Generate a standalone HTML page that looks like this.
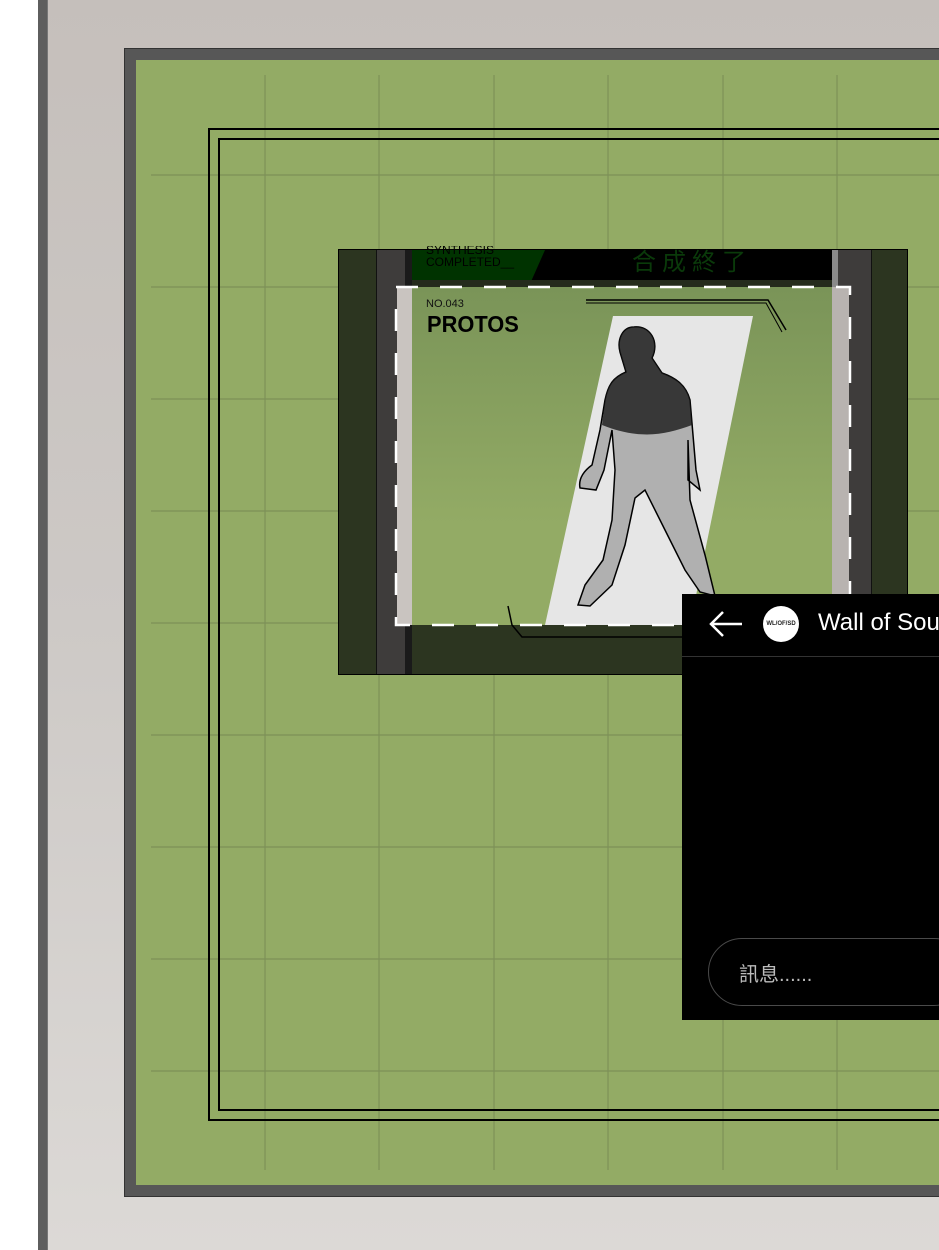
<!DOCTYPE html>
<html><head><meta charset="utf-8"><style>
*{margin:0;padding:0;box-sizing:border-box}
body{width:939px;height:1250px;overflow:hidden;position:relative;background:#fff;font-family:"Liberation Sans","Noto Sans CJK TC",sans-serif}
.a{position:absolute}
</style></head><body>
<div class="a" style="left:38px;top:0;width:10px;height:1250px;background:#5e5e5e;border-right:1px solid #777"></div>
<div class="a" style="left:48px;top:0;width:891px;height:1250px;background:linear-gradient(#c5bfbb,#cdc9c6 50%,#dcd9d6)"></div>
<div class="a" style="left:124px;top:48px;width:830px;height:1149px;background:#575757;border:1px solid #333"></div>
<div class="a" style="left:136px;top:60px;width:820px;height:1125px;background:#93ab65"></div>
<svg class="a" style="left:0;top:0" width="939" height="1250">
<g stroke="#7d9158" stroke-width="1.2">
<line x1="265" y1="75" x2="265" y2="1170"/><line x1="379" y1="75" x2="379" y2="1170"/><line x1="494" y1="75" x2="494" y2="1170"/><line x1="608" y1="75" x2="608" y2="1170"/><line x1="723" y1="75" x2="723" y2="1170"/><line x1="837" y1="75" x2="837" y2="1170"/>
<line x1="151" y1="175" x2="939" y2="175"/><line x1="151" y1="287" x2="939" y2="287"/><line x1="151" y1="399" x2="939" y2="399"/><line x1="151" y1="511" x2="939" y2="511"/><line x1="151" y1="623" x2="939" y2="623"/><line x1="151" y1="735" x2="939" y2="735"/><line x1="151" y1="847" x2="939" y2="847"/><line x1="151" y1="959" x2="939" y2="959"/><line x1="151" y1="1071" x2="939" y2="1071"/>
</g>
<g fill="none" stroke="#000" stroke-width="2">
<rect x="209" y="129" width="760" height="991"/><rect x="219" y="139" width="740" height="971"/>
</g>
</svg>
<!-- card -->
<div class="a" style="left:338px;top:249px;width:570px;height:426px;background:#2c3520;border:1px solid #000"></div>
<div class="a" style="left:376px;top:250px;width:29px;height:424px;background:#3e3c3b;border-left:1px solid #111"></div>
<div class="a" style="left:405px;top:250px;width:7px;height:424px;background:#1a1a1a"></div>
<div class="a" style="left:832px;top:250px;width:6px;height:424px;background:#8a8a8a"></div>
<div class="a" style="left:838px;top:250px;width:34px;height:424px;background:#3e3c3b;border-right:1px solid #111"></div>
<div class="a" style="left:412px;top:250px;width:420px;height:30px;background:#000"></div>
<div class="a" style="left:412px;top:250px;width:133px;height:30px;background:#003300;clip-path:polygon(0 0,100% 0,90% 100%,0 100%)"></div>
<div class="a" style="left:426px;top:246px;font-size:12px;line-height:12px;color:#000;letter-spacing:0;overflow:hidden;height:26px;width:120px"><div style="margin-top:-2px">SYNTHESIS<br>COMPLETED__</div></div>
<div class="a" style="left:632px;top:247px;font-size:24px;line-height:26px;color:#0a3a0a;letter-spacing:6px;font-family:'Noto Sans CJK TC',sans-serif">合成終了</div>
<div class="a" style="left:412px;top:280px;width:420px;height:7px;background:#252b1c"></div>
<div class="a" style="left:397px;top:287px;width:15px;height:338px;background:#c9c4c0"></div>
<div class="a" style="left:832px;top:287px;width:17px;height:338px;background:#b8b3b0"></div>
<div class="a" style="left:412px;top:287px;width:420px;height:338px;background:linear-gradient(#7a9458,#93ab65 70%)"></div>
<div class="a" style="left:412px;top:625px;width:420px;height:49px;background:#2c3520"></div>
<svg class="a" style="left:0;top:0" width="939" height="1250">
<polygon points="613,316 753,316 690,625 545,625" fill="#e6e6e6"/>
<path d="M634,327 C622,327 617,340 620,352 L626,372 C612,378 608,386 605,400 L600,430 L592,465 C585,470 578,478 580,488 L596,490 L604,470 L612,430 L615,470 L612,520 L603,560 L585,585 L578,605 L590,606 L612,585 L625,545 L635,498 L645,490 L665,530 L685,570 L700,592 L715,596 L705,555 L690,500 L688,440 L688,480 L700,490 L696,470 L690,400 C686,385 676,378 662,373 L652,358 C660,342 650,325 634,327 Z" fill="#b0b0b0" stroke="#000" stroke-width="1.5"/>
<path d="M634,327 C622,327 617,340 620,352 L626,372 C612,378 608,386 605,400 L602,425 C640,440 665,435 692,425 L690,400 C686,385 676,378 662,373 L652,358 C660,342 650,325 634,327 Z" fill="#1a1a1a" opacity="0.8"/>
<rect x="396" y="287" width="454" height="338" fill="none" stroke="#fff" stroke-width="2.5" stroke-dasharray="22,22"/>
<path d="M586,300 L768,300 L786,330" fill="none" stroke="#000" stroke-width="1.5"/>
<path d="M586,303 L766,303 L782,332" fill="none" stroke="#000" stroke-width="1"/>
<path d="M508,606 L512,625 L522,637 L690,637" fill="none" stroke="#000" stroke-width="1.5"/>
</svg>
<div class="a" style="left:426px;top:298px;font-size:11px;color:#111">NO.043</div>
<div class="a" style="left:427px;top:311px;font-size:23px;font-weight:bold;color:#000;transform:scaleX(0.95);transform-origin:left">PROTOS</div>
<!-- chat -->
<div class="a" style="left:682px;top:594px;width:260px;height:426px;background:#000"></div>
<div class="a" style="left:682px;top:656px;width:260px;height:1px;background:#333"></div>
<svg class="a" style="left:706px;top:608px" width="40" height="32"><path d="M36,16 H6 M17,4 L5,16 L17,28" fill="none" stroke="#fff" stroke-width="2.5"/></svg>
<div class="a" style="left:763px;top:606px;width:36px;height:36px;border-radius:50%;background:#fff;color:#222;font-size:6px;line-height:36px;text-align:center;font-weight:bold">WL/OF/SD</div>
<div class="a" style="left:818px;top:609px;font-size:24px;color:#fff;white-space:nowrap">Wall of Sou</div>
<div class="a" style="left:708px;top:938px;width:260px;height:68px;border:1.5px solid #4a4a4a;border-radius:34px"></div>
<div class="a" style="left:739px;top:958px;font-size:20px;color:#bbb;white-space:nowrap">訊息......</div>
</body></html>
